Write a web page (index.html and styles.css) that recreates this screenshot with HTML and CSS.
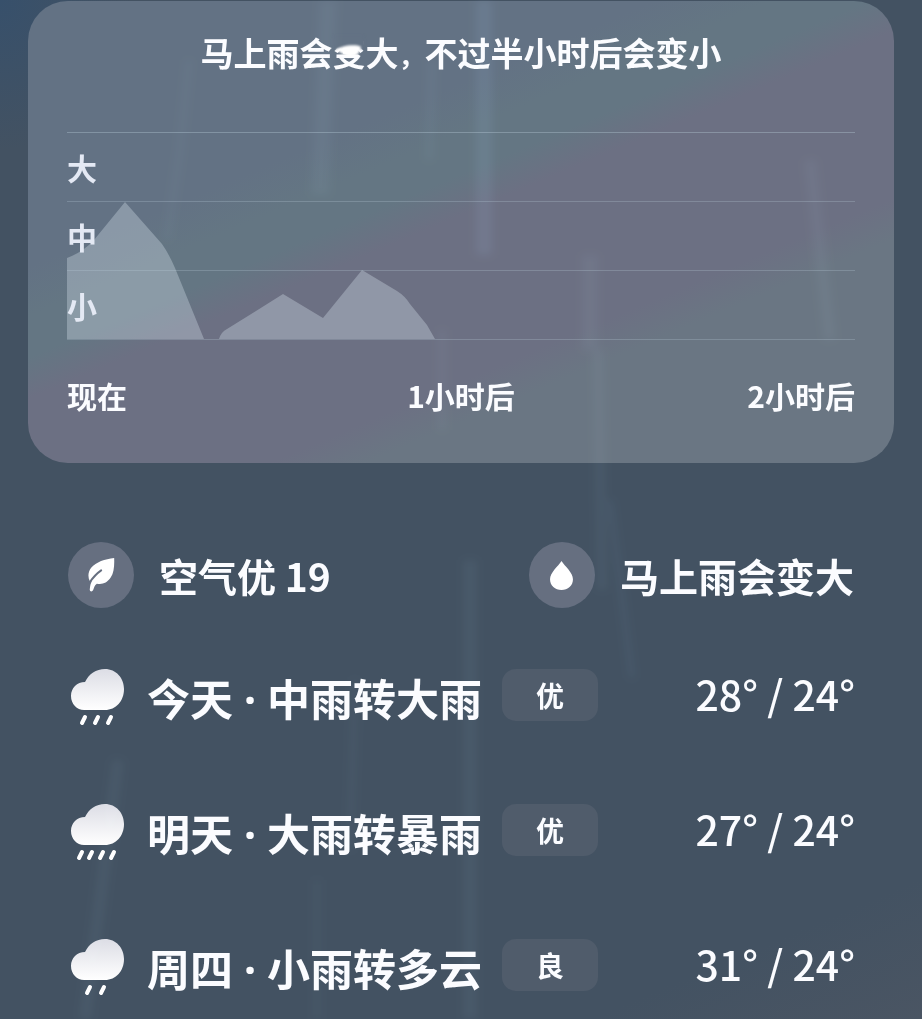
FILE: index.html
```html
<!DOCTYPE html>
<html lang="zh-CN">
<head>
    <meta charset="UTF-8">
    <meta name="viewport" content="width=device-width, initial-scale=1.0">
    <title>天气</title>
    <link rel="stylesheet" href="styles.css">
</head>
<body>

    <main class="page">
        <section class="rain-card">
            <h1 class="rain-title">马上雨会<span class="splash-char">变<svg class="splash" viewBox="0 0 40 32" aria-hidden="true"><rect class="splash-mist" x="4" y="-1" width="33" height="14" rx="3"/><path class="splash-drop" d="M8 15 C10 9 31 8 33 11 C32 17 29 21 22 21 C16 21 13 15 8 15 Z"/></svg></span>大<span class="comma">，</span>不过半小时后会变小</h1>

            <div class="chart">
                <svg class="chart-area" viewBox="0 0 788 207" preserveAspectRatio="none" aria-hidden="true">
                    <path d="M0 126 Q16 120 27 108 L58 70 L95 112 Q102 122 108 136 L137 207 H0 Z"/>
                    <path d="M152 207 Q154 200 160 197 L216 162 L256 186 L295 138 L330 159 Q338 164 343 172 L360 193 L368 207 Z"/>
                </svg>
                <div class="level">大</div>
                <div class="level">中</div>
                <div class="level">小</div>
            </div>

            <div class="times">
                <span>现在</span>
                <span>1小时后</span>
                <span>2小时后</span>
            </div>
        </section>

        <section class="summary">
            <div class="summary-item">
                <span class="badge">
                    <svg class="leaf" viewBox="0 0 80 102" aria-hidden="true">
                        <path fill="#fff" d="M78 0 C79 25 77 43 68 58 C56 76 42 80 26 77 C19 82 18 88 15 96 C12 103 3 101 5 92 C6 84 7 77 11 70 L5 70 C-2 56 0 40 9 29 C24 12 50 3 78 0 Z"/>
                        <path class="vein" d="M4 74 Q20 50 39 37"/>
                    </svg>
                </span>
                <span class="summary-text">空气优 19</span>
            </div>
            <div class="summary-item">
                <span class="badge">
                    <svg class="drop" viewBox="0 0 68 86" aria-hidden="true">
                        <path fill="#fff" d="M34 0 C24 16 0 34 0 54 C0 73 15 86 34 86 C53 86 68 73 68 54 C68 34 44 16 34 0 Z"/>
                    </svg>
                </span>
                <span class="summary-text">马上雨会变大</span>
            </div>
        </section>

        <ul class="forecast">
            <li class="day">
                <svg class="weather-icon" viewBox="0 0 54 58" aria-hidden="true">
                    <use href="#cloud"/>
                    <path class="rain" d="M14 48 L11 54 M27 48 L24 54 M40 48 L37 54"/>
                </svg>
                <span class="day-text">今天<span class="sep">·</span>中雨转大雨</span>
                <span class="quality">优</span>
                <span class="temp">28° / 24°</span>
            </li>
            <li class="day">
                <svg class="weather-icon" viewBox="0 0 54 58" aria-hidden="true">
                    <use href="#cloud"/>
                    <path class="rain" d="M11 48 L8 54 M21 48 L18 54 M32 48 L29 54 M43 48 L40 54"/>
                </svg>
                <span class="day-text">明天<span class="sep">·</span>大雨转暴雨</span>
                <span class="quality">优</span>
                <span class="temp">27° / 24°</span>
            </li>
            <li class="day">
                <svg class="weather-icon" viewBox="0 0 54 58" aria-hidden="true">
                    <use href="#cloud"/>
                    <path class="rain" d="M19 48 L16 54 M33 48 L30 54"/>
                </svg>
                <span class="day-text">周四<span class="sep">·</span>小雨转多云</span>
                <span class="quality">良</span>
                <span class="temp">31° / 24°</span>
            </li>
        </ul>
    </main>

    <!-- 背景雨丝 -->
    <svg class="streaks" viewBox="0 0 922 1019" preserveAspectRatio="none" aria-hidden="true">
        <defs>
            <linearGradient id="cloud-fill" x1="0" y1="0" x2="0" y2="1">
                <stop offset="0" stop-color="#dcdde5"/>
                <stop offset="1" stop-color="#ffffff"/>
            </linearGradient>
            <path id="cloud" fill="url(#cloud-fill)" d="M13 41 C6 41 0 35 0 27 C0 19 6 13 14 13 C18 5 25 0 34 0 C45 0 53 9 53 20 C53 32 45 41 34 41 Z"/>
        </defs>
        <g class="streak-lines">
            <path stroke-width="5" d="M189 60 L180 150 L167 240"/>
            <path stroke-width="18" d="M328 0 L320 195"/>
            <path stroke-width="7" d="M432 60 L429 160"/>
            <path class="bright" stroke-width="16" d="M484 0 V255"/>
            <path stroke-width="7" d="M442 330 V430"/>
            <path stroke-width="16" d="M590 255 V350"/>
            <path stroke-width="10" d="M598 350 L602 590"/>
            <path class="bright" stroke-width="4" d="M610 500 L632 678"/>
            <path stroke-width="12" d="M810 160 L830 340"/>
            <path stroke-width="14" d="M470 560 V1019"/>
            <path stroke-width="6" d="M355 680 L350 850"/>
            <path stroke-width="12" d="M118 760 L85 1019"/>
            <path stroke-width="5" d="M317 880 V1019"/>
        </g>
    </svg>

</body>
</html>
```

FILE: styles.css
```css
* {
    box-sizing: border-box;
}
body {
    margin: 0;
    position: relative;
    min-height: 100vh;
    font-family: "Noto Sans CJK SC", sans-serif;
    font-weight: 700;
    color: #fbfcff;
    background:
        radial-gradient(ellipse 130px 150px at 0 0, #37506b 0%, rgba(55, 80, 107, 0) 100%),
        linear-gradient(157deg, #435262 0%, #435262 90%, #4a5563 100%);
}
.page {
    padding: 1px 28px 20px;
}

/* 两小时降雨 */
.rain-card {
    padding: 31px 39px 48px;
    border-radius: 40px;
    background: linear-gradient(157deg, #637284 0%, #637284 32%, #647683 38%, #647683 43%, #6c7083 48%, #6c7083 68%, #6a7683 73%, #6a7683 100%);
}
.rain-title {
    margin: 0 0 60px;
    font-size: 33px;
    line-height: 40px;
    text-align: center;
    white-space: nowrap;
}
.comma {
    font-size: 26px;
    line-height: 1;
}
.splash-char {
    position: relative;
}
.splash {
    position: absolute;
    left: -4px;
    top: 8px;
    width: 40px;
    height: 32px;
    overflow: visible;
}
.splash-mist {
    fill: #637284;
    filter: blur(1px);
}
.splash-drop {
    fill: #ffffff;
    filter: blur(1px);
}
.chart {
    position: relative;
    border-top: 1px solid rgba(190, 210, 222, 0.35);
}
.chart-area {
    position: absolute;
    left: 0;
    top: -1px;
    width: 100%;
    height: 207px;
    fill: rgba(220, 230, 240, 0.33);
}
.level {
    position: relative;
    height: 69px;
    border-bottom: 1px solid rgba(190, 210, 222, 0.25);
    font-size: 30px;
    line-height: 68px;
    color: #e4e9f4;
}
.times {
    display: grid;
    grid-template-columns: 1fr 1fr 1fr;
    margin-top: 35px;
    font-size: 30px;
    line-height: 40px;
    white-space: nowrap;
}
.times span:nth-child(2) {
    text-align: center;
}
.times span:nth-child(3) {
    text-align: right;
}

/* 空气与降雨提示 */
.summary {
    display: flex;
    justify-content: space-between;
    padding: 0 40px;
    margin-top: 79px;
    font-size: 39px;
    white-space: nowrap;
}
.summary-item {
    display: flex;
    align-items: center;
    gap: 25px;
}
.summary-text {
    line-height: 60px;
}
.badge {
    display: flex;
    align-items: center;
    justify-content: center;
    width: 66px;
    height: 66px;
    border-radius: 50%;
    background: #666f80;
}
.leaf {
    width: 27px;
    height: 34px;
}
.vein {
    fill: none;
    stroke: #666f80;
    stroke-width: 6;
    stroke-linecap: round;
}
.drop {
    width: 23px;
    height: 29px;
}

/* 每日预报 */
.forecast {
    display: flex;
    flex-direction: column;
    gap: 77px;
    list-style: none;
    margin: 61px 0 0;
    padding: 0 39px 0 43px;
    white-space: nowrap;
}
.day {
    display: flex;
    align-items: center;
    height: 58px;
}
.weather-icon {
    width: 54px;
    height: 58px;
    margin-right: 22px;
}
.rain {
    fill: none;
    stroke: #ffffff;
    stroke-width: 4;
    stroke-linecap: round;
}
.day-text {
    font-size: 43px;
    line-height: 58px;
}
.sep {
    display: inline-block;
    width: 34px;
    text-align: center;
    font-family: "Noto Sans", sans-serif;
}
.quality {
    width: 96px;
    margin: 0 auto 6px 20px;
    border-radius: 14px;
    background: #505c6b;
    font-size: 28px;
    line-height: 52px;
    text-align: center;
}
.temp {
    margin-bottom: 10px;
    font-size: 41px;
    font-weight: 500;
    line-height: 52px;
}

.streaks {
    position: absolute;
    left: 0;
    top: 0;
    width: 100%;
    height: 100%;
    pointer-events: none;
    mix-blend-mode: screen;
}
.streak-lines {
    fill: none;
    stroke: rgba(110, 150, 165, 0.07);
    filter: blur(4px);
}
.bright {
    stroke: rgba(100, 150, 200, 0.11);
}
```
